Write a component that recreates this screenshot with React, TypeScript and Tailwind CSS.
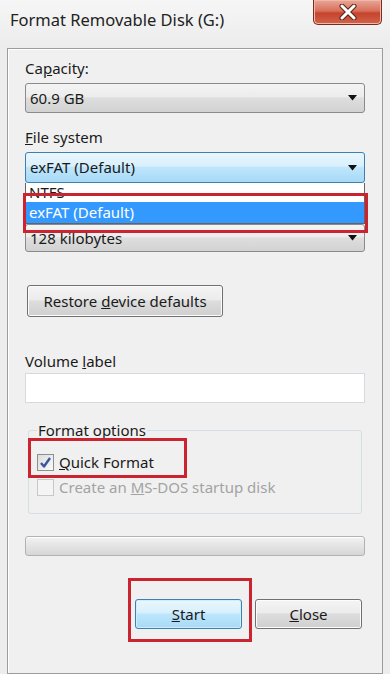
import React from 'react';

const font = { fontFamily: '"Noto Sans", "Open Sans", sans-serif' };

function Arrow() {
  return (
    <svg width="9" height="6" viewBox="0 0 9 6" className="shrink-0">
      <path d="M0 0 L9 0 L4.5 5.5 Z" fill="#111" />
    </svg>
  );
}

function Combo({ value, active, h = 30 }: { value: string; active?: boolean; h?: number }) {
  const base = active
    ? 'border-[#3c7fb1] bg-[linear-gradient(#eaf6fd_0%,#d9f0fc_45%,#bee6fd_50%,#a7d9f5_100%)]'
    : 'border-[#8a8a8a] bg-[linear-gradient(#f4f4f4_0%,#ececec_45%,#dedede_50%,#d2d2d2_100%)]';
  return (
    <div
      className={`flex items-center justify-between rounded-[3px] border pl-[4px] pr-[7px] text-[15px] text-[#1a1a1a] ${base}`}
      style={{ height: h }}
    >
      <span>{value}</span>
      <Arrow />
    </div>
  );
}

function Button({ children, primary, className = '' }: { children: React.ReactNode; primary?: boolean; className?: string }) {
  const base = primary
    ? 'border-[#3c7fb1] bg-[linear-gradient(#eaf6fd_0%,#d9f0fc_45%,#bee6fd_50%,#a7d9f5_100%)] shadow-[inset_0_0_0_1px_#cdeefd]'
    : 'border-[#707070] bg-[linear-gradient(#f4f4f4_0%,#ececec_45%,#dddddd_50%,#cfcfcf_100%)] shadow-[inset_0_0_0_1px_#fcfcfc]';
  return (
    <div className={`flex items-center justify-center rounded-[3px] border text-[15px] text-[#1a1a1a] ${base} ${className}`}>
      <span>{children}</span>
    </div>
  );
}

function Check({ checked, disabled, label }: { checked?: boolean; disabled?: boolean; label: React.ReactNode }) {
  return (
    <div className="flex h-[17px] items-center gap-[5px]">
      <div
        className={`flex h-[17px] w-[17px] items-center justify-center border ${
          disabled ? 'border-[#c8c8c8] bg-[#f4f4f4]' : 'border-[#8e8f8f] bg-[linear-gradient(135deg,#dcdcdc,#fbfbfb)]'
        }`}
      >
        {checked && (
          <svg width="13" height="13" viewBox="0 0 13 13">
            <path d="M2 7 L5 10.5 L11 2" fill="none" stroke="#3d55a0" strokeWidth="2.4" strokeLinejoin="round" />
          </svg>
        )}
      </div>
      <span className={`text-[15px] leading-[17px] ${disabled ? 'text-[#a3a3a3]' : 'text-[#1a1a1a]'}`}>{label}</span>
    </div>
  );
}

export default function App() {
  return (
    <div className="relative h-[682px] w-[390px] overflow-hidden bg-[#ededed]" style={font}>
      {/* title bar */}
      <div className="flex h-[48px] items-start bg-[linear-gradient(#f6f6f6,#ececec)]">
        <div className="pl-[10px] pt-[9px] text-[16.5px] leading-[22px] text-[#222]">Format Removable Disk (G:)</div>
        <div className="ml-auto mr-[8px] flex h-[25px] w-[69px] items-center justify-center rounded-b-[5px] border border-t-0 border-[#7a2a1e] bg-[linear-gradient(#e9a797_0%,#d8705c_45%,#c6432c_55%,#d1644c_100%)] shadow-[inset_0_0_0_1px_#f0b8a8]">
          <svg width="20" height="16" viewBox="0 0 20 16">
            <path d="M4 2 L16 14 M16 2 L4 14" stroke="#5a2016" strokeWidth="5" strokeLinecap="round" />
            <path d="M4 2 L16 14 M16 2 L4 14" stroke="#fff" strokeWidth="3" strokeLinecap="round" />
          </svg>
        </div>
      </div>

      {/* client area */}
      <div className="mx-[7px] flex h-[626px] flex-col border border-[#9c9c9c] bg-[#f0f0f0] px-[17px] pt-[9px] shadow-[inset_1px_1px_0_#fff]">
        <div className="h-[20px] text-[15px] leading-[20px] text-[#1a1a1a]">
          Ca<span className="underline">p</span>acity:
        </div>
        <div className="mt-[5px]">
          <Combo value="60.9 GB" />
        </div>
        <div className="mt-[14px] h-[20px] text-[15px] leading-[20px] text-[#1a1a1a]">
          <span className="underline">F</span>ile system
        </div>
        <div className="relative mt-[5px]">
          <Combo value="exFAT (Default)" active h={31} />
          {/* open list */}
          <div className="absolute left-0 right-0 top-[31px] z-10 flex flex-col border border-[#646464] border-t-0 bg-white text-[15px]">
            <div className="h-[19px] pl-[3px] leading-[19px] text-[#1a1a1a]">NTFS</div>
            <div className="h-[21px] bg-[#3399ff] pl-[3px] leading-[21px] text-white">exFAT (Default)</div>
          </div>
        </div>
        {/* allocation unit label row, hidden under the open list */}
        <div className="h-[41px]" />
        <div>
          <Combo value="128 kilobytes" h={28} />
        </div>
        <Button className="mt-[33px] ml-[2px] h-[32px] w-[196px]">
          Restore <span className="underline">d</span>evice defaults
        </Button>
        <div className="mt-[34px] h-[20px] text-[15px] leading-[20px] text-[#1a1a1a]">
          Volume <span className="underline">l</span>abel
        </div>
        <div className="mt-[2px] h-[30px] border border-[#d6dae0] bg-white" />

        <fieldset className="mx-[3px] mt-[18px] h-[93px] rounded-[3px] border border-[#d5dfe5] px-[8px]">
          <legend className="px-[1px] text-[15px] leading-[18px] text-[#1a1a1a]">Format options</legend>
          <div className="mt-[15px] flex flex-col gap-[8px]">
            <Check checked label={<><span className="underline">Q</span>uick Format</>} />
            <Check disabled label={<>Create an <span className="underline">M</span>S-DOS startup disk</>} />
          </div>
        </fieldset>

        <div className="mt-[22px] h-[20px] rounded-[3px] border border-[#b2b2b2] bg-[linear-gradient(#f3f3f3_0%,#e4e4e4_50%,#d6d6d6_100%)] shadow-[inset_0_1px_0_#fff]" />

        <div className="mt-[43px] flex justify-end gap-[13px] pr-[3px]">
          <Button primary className="h-[30px] w-[107px]">
            <span className="underline">S</span>tart
          </Button>
          <Button className="h-[30px] w-[107px]">
            <span className="underline">C</span>lose
          </Button>
        </div>
      </div>
      <div className="h-[10px] bg-white" />

      {/* annotation boxes */}
      <div className="pointer-events-none absolute left-[23px] top-[193px] z-20 h-[40px] w-[345px] border-[3px] border-[#c9242f]" />
      <div className="pointer-events-none absolute left-[28px] top-[438px] z-20 h-[40px] w-[159px] border-[3px] border-[#c9242f]" />
      <div className="pointer-events-none absolute left-[128px] top-[578px] z-20 h-[64px] w-[124px] border-[3px] border-[#c9242f]" />
    </div>
  );
}
